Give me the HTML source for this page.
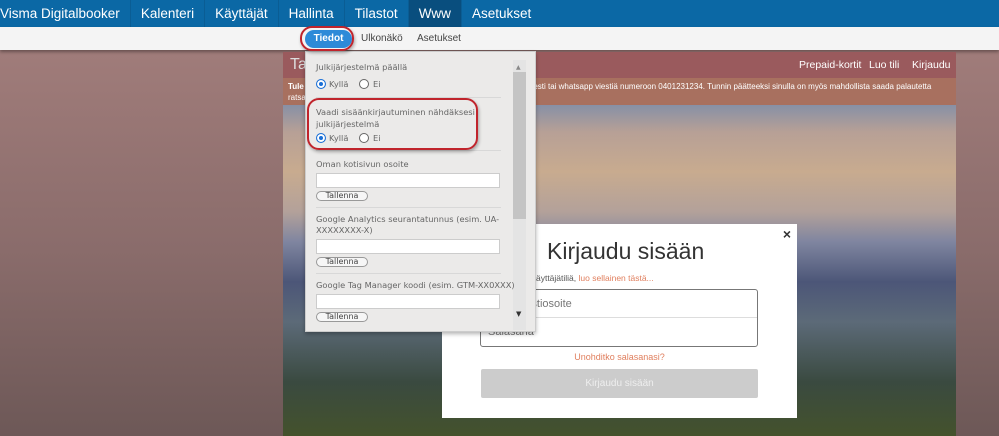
<!DOCTYPE html>
<html><head><meta charset="utf-8"><style>
*{margin:0;padding:0;box-sizing:border-box}
body{width:999px;height:436px;overflow:hidden;position:relative;font-family:"Liberation Sans",sans-serif;background:linear-gradient(#a07c7a 50px,#8a6c6b 250px,#6d5857 436px)}
.nav{position:absolute;left:0;top:0;width:999px;height:27px;background:#0b68a5;display:flex;color:#fff;font-size:13.5px}
.nav div{padding:0 10px;line-height:27px;border-right:1px solid #0a5d94}
.nav .act{background:#094e7e}
.sub{position:absolute;left:0;top:27px;width:999px;height:23px;background:#f4f4f4;box-shadow:0 2px 3px rgba(0,0,0,.35);font-size:10px;color:#444}
.sub span{position:absolute;top:6px}
.tied{position:absolute;left:305px;top:30px;width:47px;height:18px;background:#2d8ad8;border-radius:9px;color:#fff;font-size:10px;text-align:center;line-height:18px;font-weight:bold}
.ring{position:absolute;border:2px solid #c0242c;border-radius:12px;box-shadow:1px 2px 3px rgba(0,0,0,.3)}
.page{position:absolute;left:283px;top:52px;width:673px;height:384px;background:linear-gradient(180deg,#8790a6 53px,#b7a096 80px,#c8ab8f 120px,#b3a19a 160px,#7f85a0 190px,#4c5678 230px,#5c6a78 270px,#3a4a40 330px,#44522c 384px)}
.hdr{position:absolute;left:0;top:0;width:673px;height:26px;background:#9a5a5d;color:#fff;font-size:10.5px}
.note{position:absolute;left:0;top:26px;width:673px;height:27px;background:#a8705f;color:#fff;font-size:8px;padding:3px 5px;line-height:11px}
.panel{position:absolute;left:305px;top:51px;width:231px;height:281px;background:#ebeae9;border:1px solid #ccc;box-shadow:0 2px 4px rgba(0,0,0,.3);font-family:"DejaVu Sans",sans-serif;font-size:8.3px;color:#666}
.panel .t{position:absolute;left:10px}
.rad{position:absolute;width:10px;height:10px;border-radius:50%;border:1px solid #666;background:#fff}
.rad.on{border-color:#1a6fd6;box-shadow:inset 0 0 0 2px #fff;background:#1a6fd6}
.inp{position:absolute;left:10px;width:184px;height:15px;background:#fff;border:1px solid #ccc}
.btn{position:absolute;left:10px;width:52px;height:10px;border:1px solid #999;border-radius:6px;background:#f6f6f6;font-size:8px;text-align:center;line-height:8px;color:#444}
.hr{position:absolute;left:10px;width:185px;border-top:1px solid #d8d8d8}
.modal{position:absolute;left:442px;top:224px;width:355px;height:194px;background:#fff}
</style></head><body>
<div class="nav"><div style="padding-left:0">Visma Digitalbooker</div><div>Kalenteri</div><div>Käyttäjät</div><div>Hallinta</div><div>Tilastot</div><div class="act">Www</div><div style="border:none">Asetukset</div></div>
<div class="sub"><span style="left:361px">Ulkonäkö</span><span style="left:417px">Asetukset</span></div>
<div class="tied">Tiedot</div>
<div class="page">
 <div class="hdr"><span style="position:absolute;left:7px;top:4px;font-size:16px;color:#ddd">Tampereen ponitila</span><span style="position:absolute;left:516px;top:7px">Prepaid-kortit</span><span style="position:absolute;left:586px;top:7px">Luo tili</span><span style="position:absolute;left:629px;top:7px">Kirjaudu</span></div>
 <div class="note"><b>Tule</b> tallille ja ratsasta. Jos haluat tietyn hevosen tunnille, laita tekstiviesti tai whatsapp viestiä numeroon 0401231234. Tunnin päätteeksi sinulla on myös mahdollista saada palautetta ratsastuksestasi.</div>
</div>
<div class="modal">
 <div style="position:absolute;right:6px;top:2px;font-size:14px;font-weight:bold;color:#333">×</div>
 <div style="position:absolute;left:105px;top:14px;font-size:23px;color:#333">Kirjaudu sisään</div>
 <div style="position:absolute;left:25px;top:49px;font-size:8.5px;color:#555">Jos sinulla ei ole käyttäjätiliä, <span style="color:#e07f5e">luo sellainen tästä...</span></div>
 <div style="position:absolute;left:38px;top:65px;width:278px;height:58px;border:1px solid #777;border-radius:3px"><div style="position:absolute;left:0;top:27px;width:100%;border-top:1px solid #ddd"></div><span style="position:absolute;left:7px;top:8px;font-size:11px;color:#777">Sähköpostiosoite</span><span style="position:absolute;left:7px;top:36px;font-size:11px;color:#777">Salasana</span></div>
 <div style="position:absolute;left:0;width:355px;top:128px;text-align:center;font-size:9px;color:#e07f5e">Unohditko salasanasi?</div>
 <div style="position:absolute;left:39px;top:145px;width:277px;height:29px;background:#ccc;border-radius:2px;color:#eee;font-size:10px;text-align:center;line-height:29px">Kirjaudu sisään</div>
</div>
<div class="panel">
 <div style="position:absolute;left:207px;top:8px;width:13px;height:270px;background:#e4e4e4"></div>
 <div style="position:absolute;left:207px;top:20px;width:13px;height:147px;background:#c4c4c4"></div>
 <div style="position:absolute;left:210px;top:12px;font-size:6px;color:#888">▲</div>
 <div style="position:absolute;left:210px;top:258px;font-size:7px;color:#333">▼</div>
 <div class="t" style="top:10px">Julkijärjestelmä päällä</div>
 <div class="rad on" style="left:10px;top:27px"></div><div class="t" style="left:23px;top:27px">Kyllä</div>
 <div class="rad" style="left:53px;top:27px"></div><div class="t" style="left:67px;top:27px">Ei</div>
 <div class="hr" style="top:45px"></div>
 <div class="t" style="top:54px;line-height:12px">Vaadi sisäänkirjautuminen nähdäksesi<br>julkijärjestelmä</div>
 <div class="rad on" style="left:10px;top:81px"></div><div class="t" style="left:23px;top:81px">Kyllä</div>
 <div class="rad" style="left:53px;top:81px"></div><div class="t" style="left:67px;top:81px">Ei</div>
 <div class="hr" style="top:98px"></div>
 <div class="t" style="top:107px">Oman kotisivun osoite</div>
 <div class="inp" style="top:121px"></div>
 <div class="btn" style="top:139px">Tallenna</div>
 <div class="hr" style="top:155px"></div>
 <div class="t" style="top:162px;line-height:11px">Google Analytics seurantatunnus (esim. UA-<br>XXXXXXXX-X)</div>
 <div class="inp" style="top:187px"></div>
 <div class="btn" style="top:205px">Tallenna</div>
 <div class="hr" style="top:221px"></div>
 <div class="t" style="top:228px">Google Tag Manager koodi (esim. GTM-XX0XXX)</div>
 <div class="inp" style="top:242px"></div>
 <div class="btn" style="top:260px">Tallenna</div>
</div>
<div class="ring" style="left:300px;top:26px;width:54px;height:25px"></div>
<div class="ring" style="left:307px;top:98px;width:171px;height:52px"></div>
</body></html>
